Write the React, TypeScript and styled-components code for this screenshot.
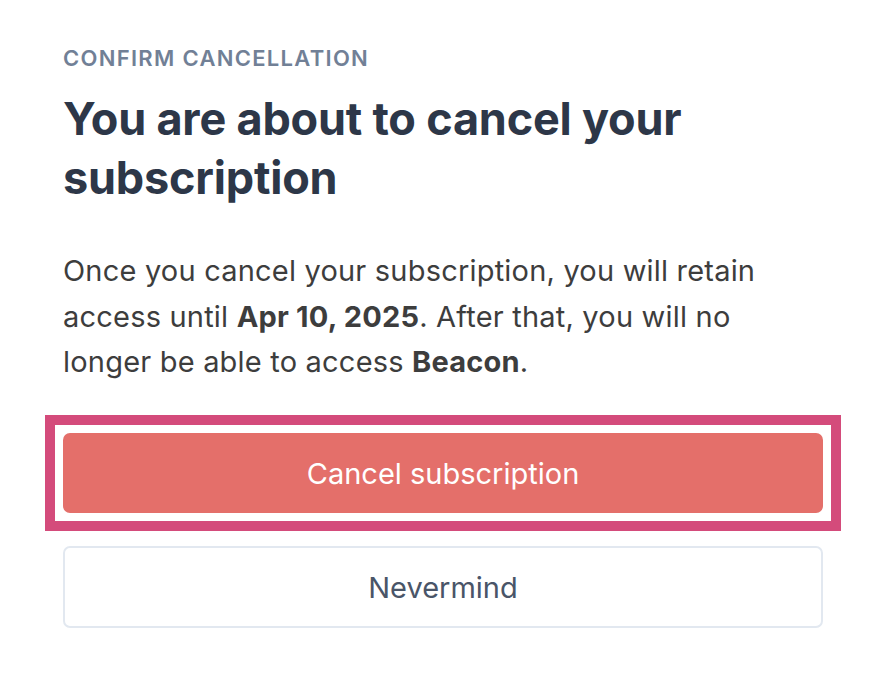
import React from "react";
import styled, { createGlobalStyle } from "styled-components";

const GlobalStyle = createGlobalStyle`
  html, body {
    margin: 0;
    padding: 0;
    background: #ffffff;
  }
  body {
    font-family: Inter, "Noto Sans", "Liberation Sans", sans-serif;
    -webkit-font-smoothing: antialiased;
  }
  * { box-sizing: border-box; }
`;

const Page = styled.main`
  width: 882px;
  min-height: 682px;
  padding: 44px 0 0 63px;
  background: #ffffff;
`;

const Panel = styled.section`
  width: 760px;
  display: flex;
  flex-direction: column;
`;

const Eyebrow = styled.div`
  font-size: 22px;
  line-height: 28px;
  font-weight: 600;
  letter-spacing: 1.3px;
  text-transform: uppercase;
  color: #718096;
`;

const Title = styled.h1`
  margin: 17px 0 0;
  font-size: 45px;
  line-height: 59px;
  font-weight: 700;
  letter-spacing: -0.2px;
  color: #2d3748;
  width: 700px;
`;

const Body = styled.p`
  margin: 41px 0 0;
  font-size: 29px;
  line-height: 45.7px;
  font-weight: 400;
  letter-spacing: 0.2px;
  color: #3d3d3d;

  strong {
    font-weight: 700;
  }
`;

const Actions = styled.div`
  margin-top: 30px;
  display: flex;
  flex-direction: column;
  gap: 15px;
`;

const Highlight = styled.div`
  margin: 0 -18px;
  border: 10px solid #d44b7b;
  padding: 8px;
`;

const Button = styled.button<{ $variant: "danger" | "plain" }>`
  display: flex;
  align-items: center;
  justify-content: center;
  width: 100%;
  height: ${(p) => (p.$variant === "danger" ? "80px" : "82px")};
  border-radius: 7px;
  font-family: Inter, "Noto Sans", "Liberation Sans", sans-serif;
  font-size: 29px;
  font-weight: 400;
  cursor: pointer;
  background: ${(p) => (p.$variant === "danger" ? "#e46f6a" : "#ffffff")};
  color: ${(p) => (p.$variant === "danger" ? "#ffffff" : "#4a5568")};
  border: ${(p) => (p.$variant === "danger" ? "none" : "2px solid #e2e8f0")};
  padding: 0;
`;

export default function App() {
  return (
    <>
      <GlobalStyle />
      <Page>
        <Panel>
          <Eyebrow>Confirm cancellation</Eyebrow>
          <Title>You are about to cancel your subscription</Title>
          <Body>
            Once you cancel your subscription, you will retain access until{" "}
            <strong>Apr 10, 2025</strong>. After that, you will no longer be
            able to access <strong>Beacon</strong>.
          </Body>
          <Actions>
            <Highlight>
              <Button $variant="danger">Cancel subscription</Button>
            </Highlight>
            <Button $variant="plain">Nevermind</Button>
          </Actions>
        </Panel>
      </Page>
    </>
  );
}
